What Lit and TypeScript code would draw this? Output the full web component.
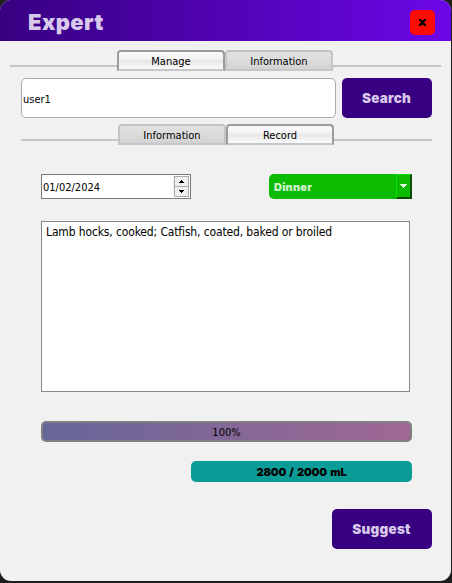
import { LitElement, html, css } from "lit";
import { customElement, property } from "lit/decorators.js";

@customElement("tab-strip")
class TabStrip extends LitElement {
  @property({ type: Array }) tabs: string[] = [];
  @property({ type: Number }) active = 0;

  static styles = css`
    :host { display: flex; height: 21px; }
    .rule { flex: 1; height: 2px; margin-top: 15px; background: #c2c7cb; }
    .lead { flex: 0 0 calc(50% - 108.5px); }
    .tab {
      box-sizing: border-box; width: 108px; height: 21px;
      border: 2px solid #c4c4c3; border-bottom-color: #c2c7cb;
      border-radius: 4px 4px 0 0;
      background: linear-gradient(#e1e1e1, #dddddd 40%, #d3d3d3);
      text-align: center; line-height: 19px; white-space: nowrap;
    }
    .active {
      border-color: #9b9b9b; border-bottom-color: #c2c7cb;
      background: linear-gradient(#fafafa, #f4f4f4 40%, #e7e7e7 50%, #fafafa);
    }
  `;

  render() {
    return html`<div class="rule lead"></div>
      ${this.tabs.map((t, i) => html`<div class="tab ${i === this.active ? "active" : ""}">${t}</div>`)}
      <div class="rule"></div>`;
  }
}

@customElement("app-root")
class AppRoot extends LitElement {
  static styles = css`
    :host {
      display: block; width: 452px; height: 583px; background: #1e1e1e; overflow: hidden;
      font: 11px "DejaVu Sans Condensed", "DejaVu Sans", sans-serif; font-stretch: condensed; color: #000;
    }
    * { box-sizing: border-box; }
    .window {
      width: 451px; height: 581px; border-radius: 11px; overflow: hidden; background: #f1f1f1;
      display: flex; flex-direction: column;
    }
    .header {
      height: 41px; flex: none; padding: 4px 16px 0 28px; display: flex; align-items: center;
      justify-content: space-between; background: linear-gradient(90deg, #370080, #6c07e8);
    }
    .heavy { font-family: Inter, sans-serif; font-weight: 900; font-stretch: normal; color: #d8c9eb; }
    .title { font-size: 22px; letter-spacing: 0.4px; line-height: 24px; padding-bottom: 2px; }
    .close {
      width: 25px; height: 25px; border-radius: 5px; background: #ff0a05; display: grid; place-items: center;
    }
    .main { margin: 9px 10px 0; }
    .page { padding: 7px 9px 0 11px; }
    .search { display: flex; gap: 6px; height: 40px; margin-bottom: 6px; }
    .query {
      flex: 1; border: 1px solid #aaa; border-radius: 5px; background: #fff;
      padding-left: 1px; line-height: 41px;
    }
    .button {
      height: 40px; border-radius: 5px; background: #370080;
      display: grid; place-items: center; font-size: 13.5px; letter-spacing: 0.25px;
    }
    .find { width: 90px; padding-right: 1px; }
    .record { padding: 29px 20px 0; }
    .filters { display: flex; justify-content: space-between; height: 25px; }
    .date {
      width: 150px; border: 1px solid #7a7a7a; background: #fff; padding: 1px;
      display: flex; justify-content: space-between; line-height: 23px;
    }
    .spin { width: 16px; background: #f0f0f0; display: block; }
    .meal {
      width: 143px; border-radius: 5px 0 0 5px; background: #0abb00; display: flex;
      justify-content: space-between; padding-left: 5px; line-height: 26px;
    }
    .mealname { font-size: 11px; color: #cdf0cb; letter-spacing: 0.2px; }
    .drop {
      width: 16px; border: solid; border-width: 1px 2px 2px 1px; border-color: #10dc06 #044b00 #044b00 #10dc06;
      display: grid; place-items: center;
    }
    .notes {
      width: 369px; height: 171px; margin-top: 22px; border: 1px solid #828790; background: #fff;
      padding: 3px 4px; font-size: 12px; line-height: 15px; white-space: nowrap; letter-spacing: -0.135px;
    }
    .progress {
      height: 21px; margin-top: 29px; border: 2px solid #808080; border-radius: 5px;
      background: linear-gradient(90deg, #666699, #a06894); text-align: center; line-height: 19px;
    }
    .water {
      width: 221px; height: 21px; margin: 19px 0 0 auto; border-radius: 5px; background: #0a9c97;
      color: #000; text-align: center; line-height: 22px; font-size: 11px;
      letter-spacing: -0.15px; word-spacing: 1.2px;
    }
    .suggest { width: 100px; margin: 27px 0 0 auto; padding-right: 1px; }
  `;

  render() {
    return html`<div class="window">
      <div class="header">
        <span class="heavy title">Expert</span>
        <div class="close"><svg width="7" height="7" viewBox="0 0 7 7" shape-rendering="crispEdges"><path d="M0 0h2v1h3v-1h2v2h-1v1h-1v1h1v1h1v2h-2v-1h-3v1h-2v-2h1v-1h1v-1h-1v-1h-1z"/></svg></div>
      </div>
      <div class="main">
        <tab-strip .tabs=${["Manage", "Information"]} .active=${0}></tab-strip>
        <div class="page">
          <div class="search">
            <div class="query">user1</div>
            <div class="button find heavy">Search</div>
          </div>
          <tab-strip .tabs=${["Information", "Record"]} .active=${1}></tab-strip>
          <div class="record">
            <div class="filters">
              <div class="date">
                <span>01/02/2024</span>
                <svg class="spin" width="16" height="21" viewBox="0 0 16 21" shape-rendering="crispEdges">
                  <path d="M1.5 .5h14v10h-14zM1.5 10.5h14v10h-14z" fill="#f0f0f0" stroke="#acacac"/>
                  <path d="M8 4h1v1h1v1h1v1h-5v-1h1v-1h1zM6 14h5v1h-1v1h-1v1h-1v-1h-1v-1h-1z"/>
                </svg>
              </div>
              <div class="meal">
                <span class="heavy mealname">Dinner</span>
                <div class="drop"><svg width="7" height="4" viewBox="0 0 7 4" shape-rendering="crispEdges"><path d="M0 0h7v1h-1v1h-1v1h-1v1h-1v-1h-1v-1h-1v-1h-1z" fill="#dff7dd"/></svg></div>
              </div>
            </div>
            <div class="notes">Lamb hocks, cooked; Catfish, coated, baked or broiled</div>
            <div class="progress">100%</div>
            <div class="water heavy">2800 / 2000 mL</div>
          </div>
          <div class="button suggest heavy">Suggest</div>
        </div>
      </div>
    </div>`;
  }
}
